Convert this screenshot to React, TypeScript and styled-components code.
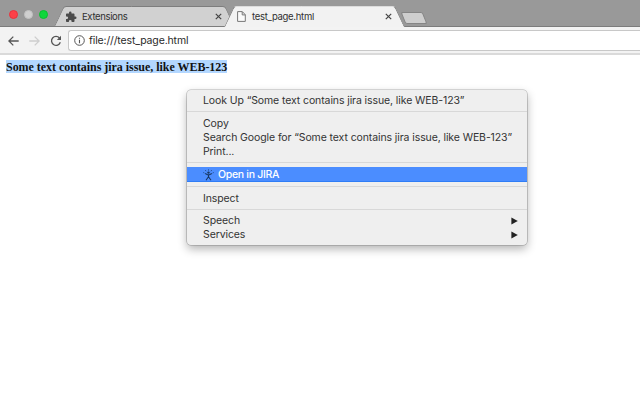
import React from "react";
import styled, { createGlobalStyle } from "styled-components";

const Global = createGlobalStyle`
  *, *::before, *::after { box-sizing: border-box; }
  html, body, #root { height: 100%; }
  body { margin: 0; background: #fff; overflow: hidden; }
  svg { display: block; flex: none; }
`;

const Window = styled.div`
  width: 640px;
  height: 400px;
  display: flex;
  flex-direction: column;
  overflow: hidden;
  background: #fff;
  font-family: Inter, "Liberation Sans", sans-serif;
  color: #333;
`;

const TabStrip = styled.header`
  height: 27px;
  flex: none;
  display: flex;
  align-items: flex-end;
  background: linear-gradient(#999 0 26px, #7c7c7c 26px);
`;

const Lights = styled.div`
  width: 59px;
  height: 27px;
  flex: none;
  display: flex;
  gap: 6px;
  padding: 9.5px 0 0 9px;
`;

const Light = styled.i<{ $color: string; $edge: string }>`
  width: 9px;
  height: 9px;
  border-radius: 50%;
  background: ${(p) => p.$color};
  border: 1px solid ${(p) => p.$edge};
`;

const Tab = styled.div<{ $active?: boolean; $width: number }>`
  position: relative;
  z-index: ${(p) => (p.$active ? 2 : 1)};
  width: ${(p) => p.$width}px;
  height: ${(p) => (p.$active ? 21 : 20)}px;
  margin-bottom: ${(p) => (p.$active ? 0 : 1)}px;
  padding-top: ${(p) => (p.$active ? 0 : 1)}px;
  flex: none;
  display: flex;
  align-items: center;
  font-size: 9.5px;

  &::before,
  &::after {
    content: "";
    position: absolute;
    z-index: -1;
    top: 0;
    bottom: 0;
    width: 55%;
    background: ${(p) => (p.$active ? "#f2f2f2" : "#d1d1d1")};
    border-top: 1px solid ${(p) => (p.$active ? "#dcdcdc" : "#7d7d7d")};
  }
  &::before {
    left: 0;
    border-left: 1px solid #808080;
    border-top-left-radius: 3px;
    transform: skewX(-25deg);
  }
  &::after {
    right: 0;
    border-right: 1px solid #808080;
    border-top-right-radius: 3px;
    transform: skewX(25deg);
  }
`;

const TabTitle = styled.span<{ $tracking: number }>`
  flex: 1;
  color: #303030;
  line-height: 12px;
  white-space: nowrap;
  letter-spacing: ${(p) => p.$tracking}px;
`;

const NewTab = styled.div`
  width: 22px;
  height: 12px;
  margin: 0 0 3px 4px;
  border: 1px solid #858585;
  border-radius: 2px;
  background: #cecece;
  transform: skewX(22deg);
`;

const Toolbar = styled.nav`
  height: 28px;
  flex: none;
  display: flex;
  align-items: flex-start;
  padding: 3px 0 0 8px;
  background: #f3f3f3;
  border-bottom: 2px solid #dadada;
`;

const NavIcons = styled.div`
  width: 60px;
  height: 21px;
  display: flex;
  align-items: center;
  gap: 10px;
  margin-left: -0.5px;
  margin-right: 0.5px;
`;

const Address = styled.div`
  flex: 1;
  height: 21px;
  display: flex;
  align-items: center;
  gap: 4px;
  padding: 0 0 0 5px;
  background: #fff;
  border: 1px solid #c8c8c8;
  border-right: 0;
  border-radius: 3px 0 0 3px;
  font-size: 10.5px;
  letter-spacing: -0.14px;
  color: #292929;
`;

const Page = styled.main`
  flex: 1;
  display: flex;
  align-items: flex-start;
  padding: 5px 6px;
`;

const Selected = styled.mark`
  height: 13px;
  background: #b3d7ff;
  color: #111;
  font: bold 12px/15px "Liberation Serif", serif;
  letter-spacing: -0.035px;
  white-space: nowrap;
`;

const Menu = styled.div`
  position: absolute;
  left: 187px;
  top: 90px;
  width: 340px;
  height: 155px;
  padding-top: 3px;
  border-radius: 4px;
  background: #efefef;
  box-shadow: 0 0 0 0.6px rgba(0, 0, 0, 0.27), 0 4px 10px rgba(0, 0, 0, 0.3);
`;

const Item = styled.div<{ $active?: boolean }>`
  height: ${(p) => (p.$active ? 15 : 14)}px;
  display: flex;
  align-items: center;
  padding: ${(p) => (p.$active ? 0 : 1)}px 9px 0 16px;
  font-size: 10.5px;
  line-height: 14px;
  font-weight: ${(p) => (p.$active ? 500 : 400)};
  letter-spacing: ${(p) => (p.$active ? -0.3 : -0.1)}px;
  white-space: nowrap;
  color: ${(p) => (p.$active ? "#fff" : "#333")};
  background: ${(p) => (p.$active ? "#4b8dff" : "transparent")};
  box-shadow: ${(p) => (p.$active ? "inset 0 -1px #2f7df6" : "none")};
`;

const Label = styled.span`
  flex: 1;
`;

const Divider = styled.hr<{ $after?: number }>`
  height: 1px;
  margin: 4px 0 ${(p) => p.$after ?? 4}px;
  border: 0;
  background: #d8d8d8;
`;

const Close = () => (
  <svg width="7" height="7" viewBox="0 0 7 7" stroke="#444" strokeWidth="1.2">
    <path d="M.8 .8 6.2 6.2M6.2 .8 .8 6.2" />
  </svg>
);

const Puzzle = () => (
  <svg width="12" height="12" viewBox="0 0 24 24" fill="#4c4c4c">
    <path d="M20.500 11H19V7c0-1.100-.9-2-2-2h-4V3.500a2.500 2.500 0 0 0-5 0V5H4c-1.100 0-2 .9-2 2v3.800h1.500a2.700 2.700 0 0 1 0 5.400H2V20c0 1.100.9 2 2 2h3.800v-1.500a2.700 2.700 0 0 1 5.400 0V22H17c1.100 0 2-.9 2-2v-4h1.500a2.500 2.500 0 0 0 0-5z" />
  </svg>
);

const FileIcon = () => (
  <svg width="9" height="11" viewBox="0 0 9 11" fill="#fafafa" stroke="#777" strokeWidth="1">
    <path d="M.6.600H5.300L8.300 3.700V10.400H.6ZM5.200.8V3.900H8.200" />
  </svg>
);

const Arrow = ({ forward = false }: { forward?: boolean }) => (
  <svg width="11" height="10" viewBox="0 0 11 10" fill="none" stroke={forward ? "#cecece" : "#555"} strokeWidth="1.3">
    <path d={forward ? "M.3 5H10M5.700.600 10.100 5 5.700 9.400" : "M10.700 5H1M5.300.600.900 5 5.300 9.400"} />
  </svg>
);

const Reload = () => (
  <svg width="12" height="12" viewBox="0 0 12 12" fill="none" stroke="#555" strokeWidth="1.300">
    <path d="M9.500 3A4.500 4.500 0 1 0 10.300 7.300" />
    <path d="M11 .8V5H6.800Z" fill="#555" stroke="none" />
  </svg>
);

const Info = () => (
  <svg width="11" height="11" viewBox="0 0 11 11" fill="none" stroke="#555">
    <circle cx="5.500" cy="5.500" r="4.800" />
    <path d="M5.500 4.800V8.200M5.500 2.700V3.800" strokeWidth="1.100" />
  </svg>
);

const JiraIcon = () => (
  <svg width="11" height="12" viewBox="0 0 11 12" fill="none" stroke="#173763">
    <circle cx="5.500" cy="3.600" r="1.200" fill="#173763" stroke="none" />
    <path d="M2.200 4.600 4.500 5.700H6.500L8.800 4.600M5.500 5.500V8.200M5.500 7.800 3 11.300M5.500 7.800 8 11.300" strokeWidth="1.100" />
    <path d="M5.500.3V1.700M2.200 1 3.100 2.200M8.800 1 7.900 2.200M.2 3.500 1.400 4M10.800 3.500 9.600 4" strokeWidth=".9" opacity=".7" />
  </svg>
);

const Submenu = () => (
  <svg width="7" height="8" viewBox="0 0 7 8" fill="#222">
    <path d="M.4.400 6.800 4 .4 7.600Z" />
  </svg>
);

const IconSlot = styled.span<{ $left?: number; $right?: number }>`
  display: flex;
  flex: none;
  margin-left: ${(p) => p.$left ?? 0}px;
  margin-right: ${(p) => p.$right ?? 0}px;
`;

export default function App() {
  return (
    <>
      <Global />
      <Window>
        <TabStrip>
          <Lights>
            <Light $color="#fc4048" $edge="#e9323c" />
            <Light $color="#cfcfcf" $edge="#c2c2c2" />
            <Light $color="#10d63c" $edge="#08c22e" />
          </Lights>
          <Tab $width={170}>
            <IconSlot $left={6} $right={5}><Puzzle /></IconSlot>
            <TabTitle $tracking={-0.35}>Extensions</TabTitle>
            <IconSlot $right={7}><Close /></IconSlot>
          </Tab>
          <Tab $active $width={170}>
            <IconSlot $left={8} $right={6}><FileIcon /></IconSlot>
            <TabTitle $tracking={-0.29}>test_page.html</TabTitle>
            <IconSlot $right={7}><Close /></IconSlot>
          </Tab>
          <NewTab />
        </TabStrip>
        <Toolbar>
          <NavIcons>
            <Arrow />
            <Arrow forward />
            <Reload />
          </NavIcons>
          <Address>
            <Info />
            file:///test_page.html
          </Address>
        </Toolbar>
        <Page>
          <Selected>Some text contains jira issue, like WEB-123</Selected>
        </Page>
        <Menu>
          <Item>Look Up “Some text contains jira issue, like WEB-123”</Item>
          <Divider />
          <Item>Copy</Item>
          <Item>Search Google for “Some text contains jira issue, like WEB-123”</Item>
          <Item>Print...</Item>
          <Divider />
          <Item $active>
            <IconSlot $right={4}><JiraIcon /></IconSlot>
            <Label>Open in JIRA</Label>
          </Item>
          <Divider />
          <Item>Inspect</Item>
          <Divider $after={3} />
          <Item><Label>Speech</Label><Submenu /></Item>
          <Item><Label>Services</Label><Submenu /></Item>
        </Menu>
      </Window>
    </>
  );
}
